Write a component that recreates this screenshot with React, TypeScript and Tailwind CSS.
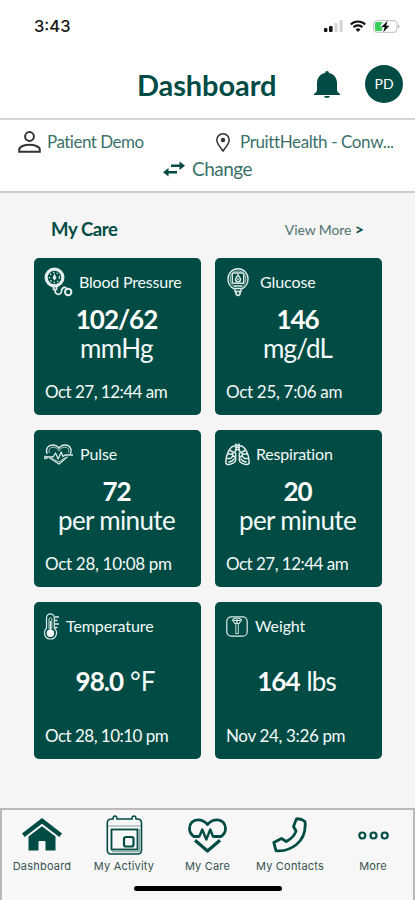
import type { ReactNode } from "react";

const green = "#004c45";

function Signal() {
  return (
    <svg width="19" height="12" viewBox="0 0 19 12">
      <rect x="0" y="8" width="3.4" height="4" rx="1" fill="#111" />
      <rect x="5" y="6" width="3.6" height="6" rx="1" fill="#111" />
      <rect x="10.5" y="3" width="3" height="9" rx="1" fill="#d2d2d2" />
      <rect x="15.6" y="0" width="3" height="12" rx="1" fill="#d2d2d2" />
    </svg>
  );
}

function Wifi() {
  return (
    <svg width="16" height="12" viewBox="0 0 16 12" fill="none" stroke="#111" strokeWidth="2.1">
      <path d="M.8 4.4a10.3 10.3 0 0 1 14.4 0" />
      <path d="M3.5 7.2a6.4 6.4 0 0 1 9 0" />
      <path d="M8 12 5.6 9.5a3.5 3.5 0 0 1 4.8 0Z" fill="#111" stroke="none" />
    </svg>
  );
}

function Battery() {
  return (
    <svg width="27" height="13" viewBox="0 0 27 13">
      <rect x=".6" y=".7" width="23.4" height="11.6" rx="3" fill="#fff" stroke="#bdbdbd" />
      <path d="M3.5 2H9.5L7 6.8H9.6L8.6 11H3.5Q2 11 2 9.5V3.5Q2 2 3.5 2Z" fill="#35d15b" />
      <path d="M25.2 4.6Q27.4 6.5 25.2 8.4Z" fill="#999" />
      <path d="M14.5 .8 8.4 7.1h3.2l-1.3 5.1 6.2-6.5h-3.3Z" fill="#111" />
    </svg>
  );
}

function PressureIcon() {
  return (
    <svg width="29" height="30" viewBox="0 0 29 30" fill="none" stroke="#e4efed">
      <circle cx="10.5" cy="10.5" r="8.4" strokeWidth="3.2" />
      <circle cx="10.5" cy="10.5" r="5" strokeWidth="1.3" strokeDasharray="1.4 2.2" />
      <path d="M10.5 6.5 12.500 11 10.5 13.500 8.500 11Z" fill="#e4efed" stroke="none" />
      <path d="M8.5 19h4v3.5h-3v-3M11 22c-.3 7 6.2 6.3 6.5 2.2.3-4.6 4.8-5.2 5.6-1" strokeWidth="1.7" />
      <circle cx="24.2" cy="25" r="3.2" strokeWidth="2" />
    </svg>
  );
}

function GlucoseIcon() {
  return (
    <svg width="22" height="29" viewBox="0 0 22 29" fill="none" stroke="#dcebe8" strokeWidth="1.4">
      <path d="M7.5 21C3.2 19 .9 15.300 1 11 1 5 5.400 .8 11 .8S21 5 21 11c0 4.300-2.300 8-6.500 10" />
      <path d="M7.600 19C4.700 17.400 3 14.500 3.200 11 3.200 6 6.600 3 11 3s7.800 3 7.800 8c0 3.500-1.600 6.400-4.400 8" strokeWidth=".8" />
      <rect x="5.300" y="5" width="11.400" height="10.300" rx="1" />
      <path d="M11 6.800c-1.600 2.300-2.500 3.200-2.500 4.500a2.500 2.500 0 0 0 5 0c0-1.300-.9-2.200-2.500-4.500ZM11 10v2" />
      <path d="M7 18h8M8 20.500h6v3H8Z" />
      <path d="M9 23.500v2.500q2 3 4 0v-2.500" strokeWidth="1.700" />
    </svg>
  );
}

function PulseIcon() {
  return (
    <svg width="30" height="21" viewBox="0 0 30 21" fill="none" stroke="#dcebe8" strokeWidth="1.300" strokeLinejoin="round">
      <path d="M3 10C1 4.600 4.500 1 8.600 1c3 0 5 1.300 6.300 3.300C16.200 2.300 18.200 1 21 1c5 0 7.500 4.500 5.300 9M5 13.500 15 20l8.500-7.200" />
      <path d="M5.500 9C4.200 5.500 6 3.200 8.900 3.200c2.700 0 4.600 1.400 6 3.700 1.500-2.300 3.300-3.700 6-3.700 3 0 4.700 2.500 3.400 5.500" strokeWidth=".8" />
      <circle cx="1.800" cy="13.500" r="1.200" />
      <path d="M3 13h6l2.500-4 2.700 6 3-7 1.700 4.500L21 11h8" />
      <path d="M8 14.500 15 18l6-4.500" strokeWidth=".8" />
    </svg>
  );
}

function LungsIcon() {
  return (
    <svg width="25" height="23" viewBox="0 0 25 23" fill="none" stroke="#e4efed" strokeWidth="1.500" strokeLinecap="round" strokeLinejoin="round">
      <path d="M11 1v6.500L7.500 11M14 1v6.500l3.500 3.500M10.500 2.200h4M10.500 4.300h4M10.500 6.400h4" />
      <path d="M9.500 3C5 3 .8 12 .8 19c0 3.300 3.500 3 6 1.700 2-1 3.800-.8 3.800-3.500V10M15.500 3C20 3 24.200 12 24.200 19c0 3.300-3.500 3-6 1.700-2-1-3.800-.8-3.800-3.500V10" />
      <path d="M3.500 11h3l3 3M5 7.500 8 9M2.500 15.500h3l2-2M4 19l3-1 2-2M21.500 11h-3l-3 3M20 7.500 17 9M22.500 15.500h-3l-2-2M21 19l-3-1-2-2" />
    </svg>
  );
}

function ThermometerIcon() {
  return (
    <svg width="16" height="27" viewBox="0 0 16 27" fill="none" stroke="#dcebe8" strokeWidth="1.200">
      <path d="M2.500 15V5C2.500-.5 10.300-.5 10.300 5v10c4.500 4.500 1.500 11-3.900 11S-1.500 19.500 2.500 15Z" />
      <path d="M5 16V6q1.400-3 2.800 0v10" strokeWidth=".9" />
      <circle cx="6.400" cy="20.300" r="3.700" fill="#fff" stroke="none" />
      <path d="M6.400 8v10M11 4h4M11 7.500h2.500M11 11h4M11 14.500h2.500" strokeWidth="1.400" />
    </svg>
  );
}

function ScaleIcon() {
  return (
    <svg width="22" height="21" viewBox="0 0 22 21" fill="none" stroke="#dcebe8" strokeWidth="1.200">
      <rect x=".8" y=".8" width="20.400" height="19.400" rx="4.500" />
      <path d="M6.500 4c2.500-2.700 6.500-2.700 9 0L13 7.500H9ZM8 4.500h6M11 3v4.500" />
      <path d="M9.800 8v9.500h2.500V8" strokeWidth=".9" />
    </svg>
  );
}

function HomeIcon() {
  return (
    <svg width="42" height="34" viewBox="0 0 42 34" fill={green}>
      <path d="M21 0 41 15.500 38.300 19 21 5.800 3.700 19 1 15.500Z" />
      <path d="M21 8.200 34.500 18.400V32.500H24.500V24Q24.500 23 23.500 23H18.500Q17.500 23 17.500 24V32.500H7.500V18.400Z" />
    </svg>
  );
}

function CalendarIcon() {
  return (
    <svg width="37" height="40" viewBox="0 0 37 40" fill="none" stroke={green}>
      <path d="M5.500 4H7Q7 1 9 1T11 4H26Q26 1 28 1T30 4H31.500Q35.500 4 35.500 8V35Q35.500 39 31.500 39H5Q1.300 39 1.300 35V8Q1.300 4 5.500 4Z" strokeWidth="1.600" />
      <path d="M2 11H35" strokeWidth="1" stroke="#829f9b" />
      <rect x="5.500" y="14.500" width="26" height="20" strokeWidth="1.800" />
      <path d="M6 36.500H32Q33.500 36.500 33.500 34V14" stroke="#8ba9a5" strokeWidth="1.500" />
      <rect x="18" y="22" width="9.500" height="9.500" rx="2" strokeWidth="2.200" />
    </svg>
  );
}

function CareIcon() {
  return (
    <svg width="39" height="35" viewBox="0 0 39 35" fill="none" stroke={green} strokeWidth="2.800" strokeLinejoin="round">
      <path d="M11 18.500H6C3 16.500 1.500 13.800 1.500 10.500 1.500 5.500 5 1.800 9.800 1.800c4 0 7.200 1.700 9.700 4.700 2.500-3 5.700-4.700 9.700-4.700 4.800 0 8.300 3.700 8.300 8.700 0 3.300-1.500 6-4.500 8H25" />
      <path d="M10 18.500H11.300L14.300 11.500 18.300 21.500 22.300 11.500 25 18.500H27" strokeWidth="2.400" />
      <path d="M7 22.300 19.500 33 32 22.300" strokeWidth="3.200" />
    </svg>
  );
}

function PhoneIcon() {
  return (
    <svg width="36" height="36" viewBox="0 0 36 36" fill="none" stroke={green} strokeWidth="2.800" strokeLinejoin="round">
      <path d="M24.500 1.800Q29 1.500 33 4.500 34.500 19 24.500 27.500 15 35 4 33.600L1.800 25.500 9.500 21.500 14.300 24.500Q22.500 20 24 14L21.500 9.500Z" />
    </svg>
  );
}

function MoreIcon() {
  return (
    <svg width="31" height="9" viewBox="0 0 31 9" fill="none" stroke={green} strokeWidth="2.200">
      <circle cx="4.300" cy="4.500" r="3" />
      <circle cx="15.500" cy="4.500" r="3" />
      <circle cx="26.700" cy="4.500" r="3" />
    </svg>
  );
}

type Reading = {
  title: string;
  icon: ReactNode;
  titleClass: string;
  value: string;
  unit: string;
  unitClass: string;
  inline?: boolean;
  date: string;
  dateClass: string;
};

const readings: Reading[] = [
  { title: "Blood Pressure", icon: <PressureIcon />, titleClass: "ml-1.5 tracking-[-0.2px]", value: "102/62", unit: "mmHg", unitClass: "tracking-[-0.6px]", date: "Oct 27, 12:44 am", dateClass: "tracking-[-0.52px]" },
  { title: "Glucose", icon: <div className="ml-0.5"><GlucoseIcon /></div>, titleClass: "ml-[11px] tracking-[-0.1px]", value: "146", unit: "mg/dL", unitClass: "tracking-[-0.8px]", date: "Oct 25, 7:06 am", dateClass: "tracking-[-0.3px]" },
  { title: "Pulse", icon: <PulseIcon />, titleClass: "ml-1.5 tracking-[-0.1px]", value: "72", unit: "per minute", unitClass: "tracking-[-0.65px]", date: "Oct 28, 10:08 pm", dateClass: "tracking-[-0.3px]" },
  { title: "Respiration", icon: <LungsIcon />, titleClass: "ml-1.5 tracking-[-0.2px]", value: "20", unit: "per minute", unitClass: "tracking-[-0.65px]", date: "Oct 27, 12:44 am", dateClass: "tracking-[-0.52px]" },
  { title: "Temperature", icon: <ThermometerIcon />, titleClass: "ml-1.5 tracking-[-0.1px]", value: "98.0", unit: "°F", unitClass: "tracking-[0px]", inline: true, date: "Oct 28, 10:10 pm", dateClass: "tracking-[-0.52px]" },
  { title: "Weight", icon: <div className="ml-px"><ScaleIcon /></div>, titleClass: "ml-[7px] tracking-[-0.1px]", value: "164", unit: "lbs", unitClass: "tracking-[-0.9px]", inline: true, date: "Nov 24, 3:26 pm", dateClass: "tracking-[-0.35px]" },
];

function Card({ r }: { r: Reading }) {
  return (
    <article className="flex h-[157px] flex-col rounded-[5px] bg-[#004c45] text-[#f4faf9]">
      <div className="flex h-12 items-center pl-2.5">
        {r.icon}
        <span className={`text-[16px] leading-5 whitespace-nowrap ${r.titleClass}`}>{r.title}</span>
      </div>
      <div className={r.inline ? "flex h-[74px] items-center justify-center gap-[7px] pr-1 pb-3" : "-mt-px flex h-[75px] flex-col items-center pr-0.5"}>
        <span className="text-[26px] leading-[29px] font-bold tracking-[-1px] text-white">{r.value}</span>
        <span className={`text-[26px] leading-[29px] whitespace-nowrap ${r.unitClass}`}>{r.unit}</span>
      </div>
      <time className={`pl-[11px] text-[17px] leading-6 whitespace-nowrap ${r.dateClass}`}>{r.date}</time>
    </article>
  );
}

const tabs = [
  { label: "Dashboard", icon: <HomeIcon /> },
  { label: "My Activity", icon: <CalendarIcon /> },
  { label: "My Care", icon: <CareIcon /> },
  { label: "My Contacts", icon: <PhoneIcon /> },
  { label: "More", icon: <MoreIcon /> },
];

export default function App() {
  return (
    <div className="flex h-[900px] w-[415px] flex-col overflow-hidden bg-[#f5f5f5] font-['Lato',sans-serif] text-[#004c45]">
      <div className="flex h-[52px] items-center justify-between bg-white pr-[15px] pl-[34px]">
        <span className="font-['Inter',sans-serif] text-[16.5px] font-medium text-[#151515]">3:43</span>
        <div className="flex items-center gap-[7px]">
          <Signal />
          <Wifi />
          <Battery />
        </div>
      </div>
      <header className="flex h-[68px] items-center border-b-2 border-[#d5d5d5] bg-white pl-[137px]">
        <h1 className="w-[177px] text-[29px] font-bold tracking-[-0.1px]">Dashboard</h1>
        <svg className="mb-0.5" width="26" height="27" viewBox="0 0 26 27" fill={green}>
          <path d="M13 0Q15 0 15 2C20 3 23 7 23 12V19Q23 21.500 26 23V24H0V23Q3 21.500 3 19V12C3 7 6 3 11 2Q11 0 13 0ZM10 25H16Q15.500 27 13 27T10 25Z" />
        </svg>
        <div className="mb-0.5 ml-[25px] flex size-[38px] items-center justify-center rounded-full bg-[#004c45] text-sm text-white">PD</div>
      </header>
      <section className="flex h-[73px] flex-col border-b-2 border-[#cbcbcb] bg-white pt-2">
        <div className="flex h-7 items-center pl-[18px] text-[17px] text-[#3b716b]">
          <svg width="23" height="22" viewBox="0 0 23 22" fill="none" stroke="#333" strokeWidth="2">
            <circle cx="11.500" cy="5.500" r="4.400" />
            <path d="M1.200 20.700V18.500C1.200 15.500 7 13.700 11.500 13.700S21.800 15.500 21.800 18.500V20.700Z" />
          </svg>
          <span className="ml-1.5 w-[169px] tracking-[-0.5px]">Patient Demo</span>
          <svg width="14" height="19" viewBox="0 0 14 19" fill="none" stroke="#333" strokeWidth="1.500">
            <path d="M7 18C5 15 .8 11 .8 7a6.200 6.200 0 0 1 12.400 0C13.200 11 9 15 7 18Z" />
            <circle cx="7" cy="7" r="2.200" fill="#333" stroke="none" />
          </svg>
          <span className="ml-2.5 tracking-[-0.38px] whitespace-nowrap">PruittHealth - Conw...</span>
        </div>
        <div className="-mt-px flex h-7 items-center pl-[163px]">
          <svg width="22" height="16" viewBox="0 0 22 16" fill={green}>
            <path d="M8 3.500H16.500V.5L22 4.800 16.500 9V6H8ZM14 10H5.500V7L0 11.300 5.500 15.500V12.500H14Z" />
          </svg>
          <span className="ml-[7px] text-[19px] tracking-[-0.5px] text-[#3b716b]">Change</span>
        </div>
      </section>
      <main className="flex grow flex-col px-[34px]">
        <div className="flex h-[65px] items-center justify-between pt-2 pr-[17px] pl-[17px]">
          <h2 className="text-[18.500px] font-bold tracking-[-0.4px]">My Care</h2>
          <a className="text-[14px] tracking-[-0.1px] text-[#52736f]">View More <b className="text-base leading-4 text-[#004c45]">&gt;</b></a>
        </div>
        <div className="grid grid-cols-[167px_167px] gap-x-3.5 gap-y-[15px]">
          {readings.map((r) => <Card key={r.title} r={r} />)}
        </div>
      </main>
      <nav className="flex h-[92px] flex-col border-x-2 border-t-2 border-[#b9b9b9] bg-[#f7f7f7]">
        <div className="grid h-[66px] grid-cols-[80px_84px_83px_82px_84px] pr-0.5">
          {tabs.map((t) => (
            <div key={t.label} className="flex flex-col items-center">
              <div className="flex h-[50px] items-center">{t.icon}</div>
              <span className="font-['Inter',sans-serif] text-[11px] leading-3 tracking-[0.2px] whitespace-nowrap text-[#36534f]">{t.label}</span>
            </div>
          ))}
        </div>
        <div className="mx-auto mt-[10px] h-[5px] w-[148px] rounded-full bg-black" />
      </nav>
    </div>
  );
}
